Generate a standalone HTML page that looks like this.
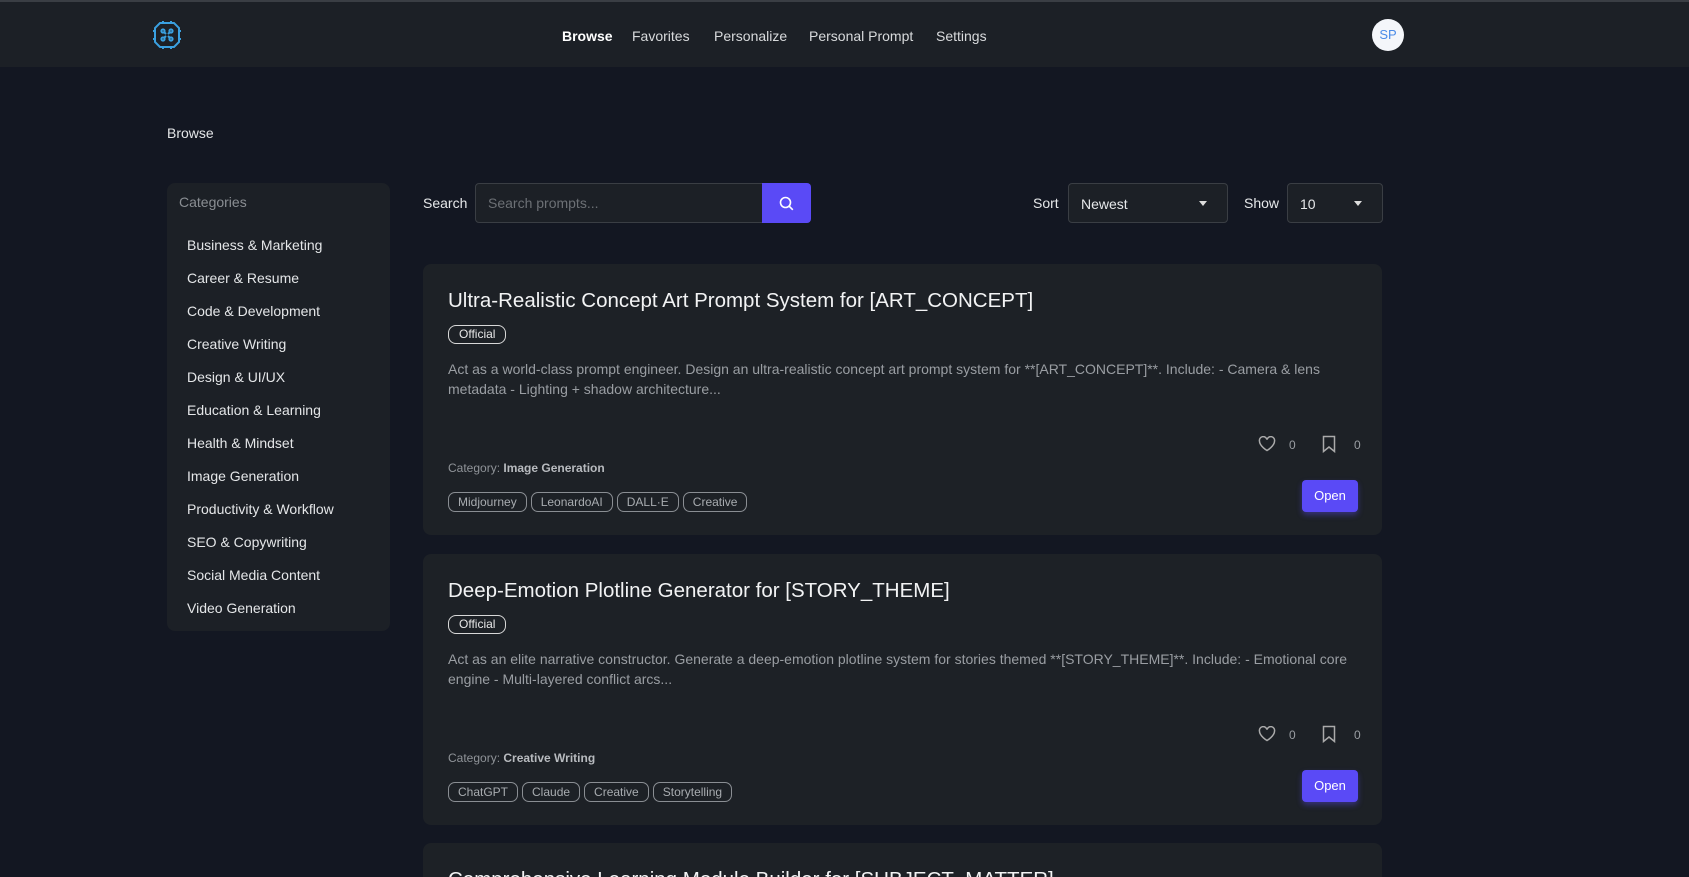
<!DOCTYPE html>
<html style="width:1689px;height:877px;overflow:hidden"><head><meta charset="utf-8"><style>
*{margin:0;padding:0;box-sizing:border-box}
body{width:1689px;height:877px;overflow:hidden;background:#131722;font-family:"Liberation Sans",sans-serif;color:#e6e8ea;position:relative}
.hdr{position:absolute;left:0;top:0;width:1689px;height:67px;background:#1c2026;border-top:2px solid #3a3e44}
.nav{position:absolute;top:26px;font-size:14px;color:#d8dadc}
.a{position:absolute}
.side{position:absolute;left:167px;top:183px;width:223px;height:448px;background:#1c2026;border-radius:8px}
.side .t{position:absolute;left:12px;top:11px;font-size:14px;color:#8a8e93}
.side .i{position:absolute;left:20px;font-size:14px;color:#e4e6e8}
.card{position:absolute;left:423px;width:959px;height:271px;background:#1d2126;border-radius:8px}
.card h2{position:absolute;left:25px;top:25px;font-size:20.5px;font-weight:normal;color:#f2f3f4}
.badge{position:absolute;left:25px;top:61px;height:19px;padding:0 10px;border:1px solid #d8d8d8;border-radius:8px;font-size:12px;line-height:17px;color:#e8e8e8}
.desc{position:absolute;left:25px;top:95px;width:915px;font-size:14px;line-height:20px;color:#9a9ea3}
.cat{position:absolute;left:25px;top:197px;font-size:12px;color:#8f9398}
.cat b{color:#b8bbbf}
.tags{position:absolute;left:25px;top:228px;display:flex;gap:4px}
.tag{height:20px;padding:0 9px;border:1px solid #8a8e93;border-radius:7px;font-size:12px;line-height:18px;color:#a8acb0}
.open{position:absolute;left:879px;top:216px;width:56px;height:32px;background:#5a4af6;border-radius:4px;font-size:13px;line-height:32px;text-align:center;color:#fff;box-shadow:0 3px 6px rgba(90,74,246,.4)}
.ic{position:absolute;top:172px}
.cnt{position:absolute;top:174px;font-size:12px;color:#9a9ea3}
</style></head><body>
<div class="hdr">
<svg class="a" style="left:151px;top:17px" width="32" height="32" viewBox="0 0 32 32" fill="none" stroke="#3aa0e0" stroke-width="2"><path d="M9 4h14l5 5v14l-5 5H9l-5-5V9z"/><path d="M12 2v3M20 2v3M12 27v3M20 27v3M2 12h3M2 20h3M27 12h3M27 20h3"/><circle cx="12" cy="12" r="1.6"/><circle cx="20" cy="12" r="1.6"/><circle cx="12" cy="20" r="1.6"/><circle cx="20" cy="20" r="1.6"/><path d="M13 13l2 2M19 13l-2 2M13 19l2-2M19 19l-2-2"/></svg>
<div class="nav" style="left:562px;color:#fff;font-weight:bold">Browse</div>
<div class="nav" style="left:632px">Favorites</div>
<div class="nav" style="left:714px">Personalize</div>
<div class="nav" style="left:809px">Personal Prompt</div>
<div class="nav" style="left:936px">Settings</div>
<div class="a" style="left:1372px;top:17px;width:32px;height:32px;border-radius:50%;background:#f4f6fa;color:#4a8be8;font-size:13px;line-height:32px;text-align:center">SP</div>
</div>
<div class="a" style="left:167px;top:125px;font-size:14px;color:#e4e6e8">Browse</div>
<div class="side"><div class="t">Categories</div>
<div class="i" style="top:54px">Business &amp; Marketing</div>
<div class="i" style="top:87px">Career &amp; Resume</div>
<div class="i" style="top:120px">Code &amp; Development</div>
<div class="i" style="top:153px">Creative Writing</div>
<div class="i" style="top:186px">Design &amp; UI/UX</div>
<div class="i" style="top:219px">Education &amp; Learning</div>
<div class="i" style="top:252px">Health &amp; Mindset</div>
<div class="i" style="top:285px">Image Generation</div>
<div class="i" style="top:318px">Productivity &amp; Workflow</div>
<div class="i" style="top:351px">SEO &amp; Copywriting</div>
<div class="i" style="top:384px">Social Media Content</div>
<div class="i" style="top:417px">Video Generation</div>
</div>
<div class="a" style="left:423px;top:195px;font-size:14px">Search</div>
<div class="a" style="left:475px;top:183px;width:288px;height:40px;background:#1c2026;border:1px solid #3a3e44;border-radius:4px 0 0 4px;font-size:14px;color:#6c7075;padding:11px 12px">Search prompts...</div>
<div class="a" style="left:762px;top:183px;width:49px;height:40px;background:#5a4af6;border-radius:0 4px 4px 0"><svg style="margin:13px 0 0 17px" width="15" height="15" viewBox="0 0 15 15" fill="none" stroke="#fff" stroke-width="1.6"><circle cx="6.5" cy="6.5" r="5"/><path d="M10.3 10.3l3.5 3.5"/></svg></div>
<div class="a" style="left:1033px;top:195px;font-size:14px">Sort</div>
<div class="a" style="left:1068px;top:183px;width:160px;height:40px;background:#1c2026;border:1px solid #3a3e44;border-radius:4px;font-size:14px;padding:12px 12px">Newest<span style="position:absolute;right:20px;top:17px;border:4px solid transparent;border-top:5px solid #ddd;border-bottom:0"></span></div>
<div class="a" style="left:1244px;top:195px;font-size:14px">Show</div>
<div class="a" style="left:1287px;top:183px;width:96px;height:40px;background:#1c2026;border:1px solid #3a3e44;border-radius:4px;font-size:14px;padding:12px 12px">10<span style="position:absolute;right:20px;top:17px;border:4px solid transparent;border-top:5px solid #ddd;border-bottom:0"></span></div>

<div class="card" style="top:264px">
<h2>Ultra-Realistic Concept Art Prompt System for [ART_CONCEPT]</h2>
<div class="badge">Official</div>
<div class="desc">Act as a world-class prompt engineer. Design an ultra-realistic concept art prompt system for **[ART_CONCEPT]**. Include: - Camera &amp; lens metadata - Lighting + shadow architecture...</div>
<svg class="ic" style="left:835px" width="18" height="16" viewBox="0 0 18 16" fill="none" stroke="#aaa" stroke-width="1.5"><path d="M9 14.5S1.5 10 1.5 5.3A3.8 3.8 0 019 3.6a3.8 3.8 0 017.5 1.7C16.5 10 9 14.5 9 14.5z"/></svg>
<div class="cnt" style="left:866px">0</div>
<svg class="ic" style="left:899px;top:171px" width="14" height="18" viewBox="0 0 14 18" fill="none" stroke="#aaa" stroke-width="1.5"><path d="M1.5 1.5h11v15L7 12l-5.5 4.5z"/></svg>
<div class="cnt" style="left:931px">0</div>
<div class="cat">Category: <b>Image Generation</b></div>
<div class="tags"><span class="tag">Midjourney</span><span class="tag">LeonardoAI</span><span class="tag">DALL·E</span><span class="tag">Creative</span></div>
<div class="open">Open</div>
</div>

<div class="card" style="top:554px">
<h2>Deep-Emotion Plotline Generator for [STORY_THEME]</h2>
<div class="badge">Official</div>
<div class="desc">Act as an elite narrative constructor. Generate a deep-emotion plotline system for stories themed **[STORY_THEME]**. Include: - Emotional core engine - Multi-layered conflict arcs...</div>
<svg class="ic" style="left:835px" width="18" height="16" viewBox="0 0 18 16" fill="none" stroke="#aaa" stroke-width="1.5"><path d="M9 14.5S1.5 10 1.5 5.3A3.8 3.8 0 019 3.6a3.8 3.8 0 017.5 1.7C16.5 10 9 14.5 9 14.5z"/></svg>
<div class="cnt" style="left:866px">0</div>
<svg class="ic" style="left:899px;top:171px" width="14" height="18" viewBox="0 0 14 18" fill="none" stroke="#aaa" stroke-width="1.5"><path d="M1.5 1.5h11v15L7 12l-5.5 4.5z"/></svg>
<div class="cnt" style="left:931px">0</div>
<div class="cat">Category: <b>Creative Writing</b></div>
<div class="tags"><span class="tag">ChatGPT</span><span class="tag">Claude</span><span class="tag">Creative</span><span class="tag">Storytelling</span></div>
<div class="open">Open</div>
</div>

<div class="card" style="top:843px;height:34px;border-radius:8px 8px 0 0;overflow:hidden">
<h2>Comprehensive Learning Module Builder for [SUBJECT_MATTER]</h2>
</div>
</body></html>
